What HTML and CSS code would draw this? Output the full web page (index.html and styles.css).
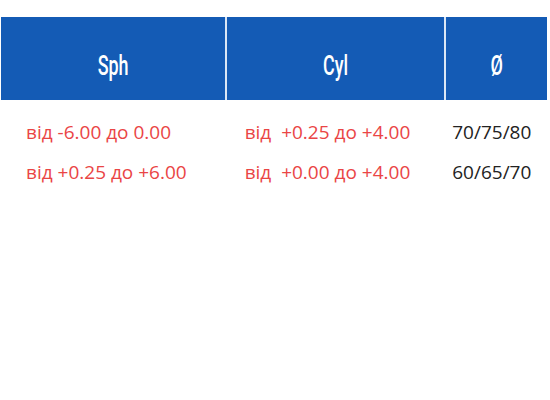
FILE: index.html
```html
<!DOCTYPE html>
<html lang="uk">
<head>
<meta charset="utf-8">
<link rel="stylesheet" href="styles.css">
</head>
<body>
<table class="lens">
  <thead>
    <tr>
      <th class="c1"><span class="hd">Sph</span></th>
      <th class="c2"><span class="hd">Cyl</span></th>
      <th class="c3"><span class="hd">Ø</span></th>
    </tr>
  </thead>
  <tbody>
    <tr class="first">
      <td class="c1 red">від -6.00 до 0.00</td>
      <td class="c2 red">від&nbsp; +0.25 до +4.00</td>
      <td class="c3">70/75/80</td>
    </tr>
    <tr>
      <td class="c1 red">від +0.25 до +6.00</td>
      <td class="c2 red">від&nbsp; +0.00 до +4.00</td>
      <td class="c3">60/65/70</td>
    </tr>
  </tbody>
</table>
</body>
</html>
```
FILE: styles.css
```css
html, body {
  margin: 0;
  padding: 0;
  background: #fff;
}
body {
  padding: 17px 3px 0 1px;
}
.lens {
  width: 546px;
  border-collapse: separate;
  border-spacing: 0;
  table-layout: fixed;
}
.lens th {
  background: #145bb5;
  color: #fff;
  height: 83px;
  padding: 13px 0 0 0;
  box-sizing: border-box;
  font-family: Roboto, "DejaVu Sans", sans-serif;
  font-weight: 500;
  font-size: 28px;
  text-align: center;
  vertical-align: middle;
}
.hd {
  display: inline-block;
  transform: scaleX(0.64);
}
.lens th.c1 { width: 224px; border-right: 2px solid #dbe7f6; }
.lens th.c2 { width: 218px; border-right: 2px solid #dbe7f6; }
.lens th.c3 { width: 100px; }
.lens td {
  font-family: "Open Sans", "Noto Sans", sans-serif;
  font-size: 19px;
  color: #222;
  padding: 0;
  height: 40px;
  vertical-align: middle;
  white-space: nowrap;
}
.lens tr.first td { padding-top: 12px; }
.lens td.red { color: #ea4545; }
.lens td.c1 { padding-left: 25px; }
.lens td.c2 { padding-left: 18px; }
.lens td.c3 { padding-left: 6px; }
```
